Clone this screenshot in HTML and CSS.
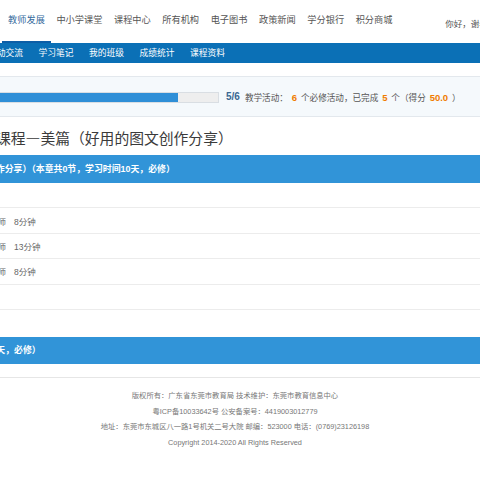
FILE: index.html
```html
<!DOCTYPE html>
<html lang="zh-CN">
<head>
<meta charset="utf-8">
<title>课程—美篇</title>
<link rel="stylesheet" href="styles.css">
</head>
<body>
<div class="topnav">
  <ul class="nav">
    <li class="active">教师发展</li>
    <li>中小学课堂</li>
    <li>课程中心</li>
    <li>所有机构</li>
    <li>电子图书</li>
    <li>政策新闻</li>
    <li>学分银行</li>
    <li>积分商城</li>
  </ul>
  <div class="user">你好，谢老师 [退出]</div>
</div>
<div class="subnav">
  <div class="subnav-inner">
    <span>互动交流</span>
    <span>学习笔记</span>
    <span>我的班级</span>
    <span>成绩统计</span>
    <span>课程资料</span>
  </div>
</div>
<div class="progress">
  <div class="bar"><div class="fill" style="width:86.5%"></div></div>
  <span class="ratio">5/6</span>
  <span class="stat">教学活动： <em>6</em> 个必修活动，已完成 <em>5</em> 个（得分 <em>50.0</em> ）</span>
</div>
<h1 class="title"><span>课程—美篇（好用的图文创作分享）</span></h1>
<div class="chapter"><span>创作分享）（本章共0节，学习时间10天，必修）</span></div>
<div class="lesson"></div>
<div class="lesson"><span class="teacher">谢老师</span><span class="dur">8分钟</span></div>
<div class="lesson"><span class="teacher">谢老师</span><span class="dur">13分钟</span></div>
<div class="lesson"><span class="teacher">谢老师</span><span class="dur">8分钟</span></div>
<div class="lesson"></div>
<div class="chapter chapter2"><span>学习时间10天，必修）</span></div>
<div class="footer">
  <p>版权所有：广东省东莞市教育局 技术维护：东莞市教育信息中心</p>
  <p>粤ICP备10033642号 公安备案号：4419003012779</p>
  <p>地址：东莞市东城区八一路1号机关二号大院 邮编：523000 电话：(0769)23126198</p>
  <p>Copyright 2014-2020 All Rights Reserved</p>
</div>
</body>
</html>
```
FILE: styles.css
```css
html, body {
  margin: 0;
  padding: 0;
  background: #fff;
}
body {
  width: 480px;
  overflow: hidden;
  font-family: "Liberation Sans", "Noto Sans CJK SC", sans-serif;
}
.topnav {
  display: flex;
  height: 43px;
  white-space: nowrap;
  overflow: hidden;
}
.nav {
  display: flex;
  list-style: none;
  margin: 0 0 0 2.3px;
  padding: 0;
}
.nav li {
  padding: 0 5.8px;
  height: 41px;
  line-height: 41px;
  font-size: 9.2px;
  color: #555;
  border-bottom: 2px solid transparent;
}
.nav li.active {
  color: #33699c;
  border-bottom-color: #0d5ea6;
}
.user {
  margin-left: 47px;
  font-size: 8.5px;
  line-height: 48px;
  color: #555;
}
.subnav {
  height: 20px;
  background: #0b70b6;
  overflow: hidden;
  white-space: nowrap;
}
.subnav-inner {
  display: flex;
  gap: 15.5px;
  margin-left: -12px;
}
.subnav span {
  font-size: 8.75px;
  line-height: 20px;
  color: #fff;
}
.progress {
  display: flex;
  align-items: center;
  height: 39px;
  margin-top: 13px;
  border-top: 1px solid #e3e8ed;
  border-bottom: 1px solid #e3e8ed;
  background: #f5f9fc;
  white-space: nowrap;
  overflow: hidden;
}
.bar {
  flex-shrink: 0;
  width: 300px;
  height: 11px;
  margin-left: -81px;
  margin-top: 2px;
  box-sizing: border-box;
  border: 1px solid #d9dee3;
  background: #eeeeee;
}
.fill {
  height: 100%;
  background: #2f8fd7;
}
.ratio {
  margin-left: 7px;
  font-size: 10px;
  font-weight: bold;
  color: #3a6791;
}
.stat {
  margin-left: 5px;
  font-size: 8.6px;
  color: #555;
}
.stat em {
  font-style: normal;
  font-weight: bold;
  font-size: 9.5px;
  color: #f07c00;
  padding: 0 1.5px;
}
.title {
  margin: 0;
  padding-top: 3px;
  height: 35px;
  line-height: 35px;
  font-size: 14.8px;
  font-weight: normal;
  color: #3a3a3a;
  font-family: "Noto Sans CJK SC", sans-serif;
  white-space: nowrap;
  overflow: hidden;
}
.title span {
  display: inline-block;
  margin-left: -4px;
}
.chapter {
  height: 28px;
  line-height: 28px;
  background: #3194d8;
  color: #fff;
  font-weight: bold;
  font-size: 8.9px;
  white-space: nowrap;
  overflow: hidden;
}
.chapter span {
  display: inline-block;
  margin-left: -13px;
}
.chapter2 {
  height: 27px;
  line-height: 27px;
  margin-top: 27px;
}
.chapter2 span {
  margin-left: -49px;
}
.lesson {
  display: flex;
  align-items: center;
  height: 25.4px;
  box-sizing: border-box;
  border-bottom: 1px solid #ececec;
  font-size: 8.5px;
  color: #666;
  white-space: nowrap;
  overflow: hidden;
}
.teacher {
  margin-left: -19.5px;
}
.dur {
  margin-left: 8px;
}
.footer {
  margin-top: 13px;
  border-top: 1px solid #e6e6e6;
  padding: 10px 10px 0 0;
  text-align: center;
  font-size: 7.3px;
  line-height: 15.7px;
  color: #777;
}
.footer p {
  margin: 0;
  white-space: nowrap;
}
```
